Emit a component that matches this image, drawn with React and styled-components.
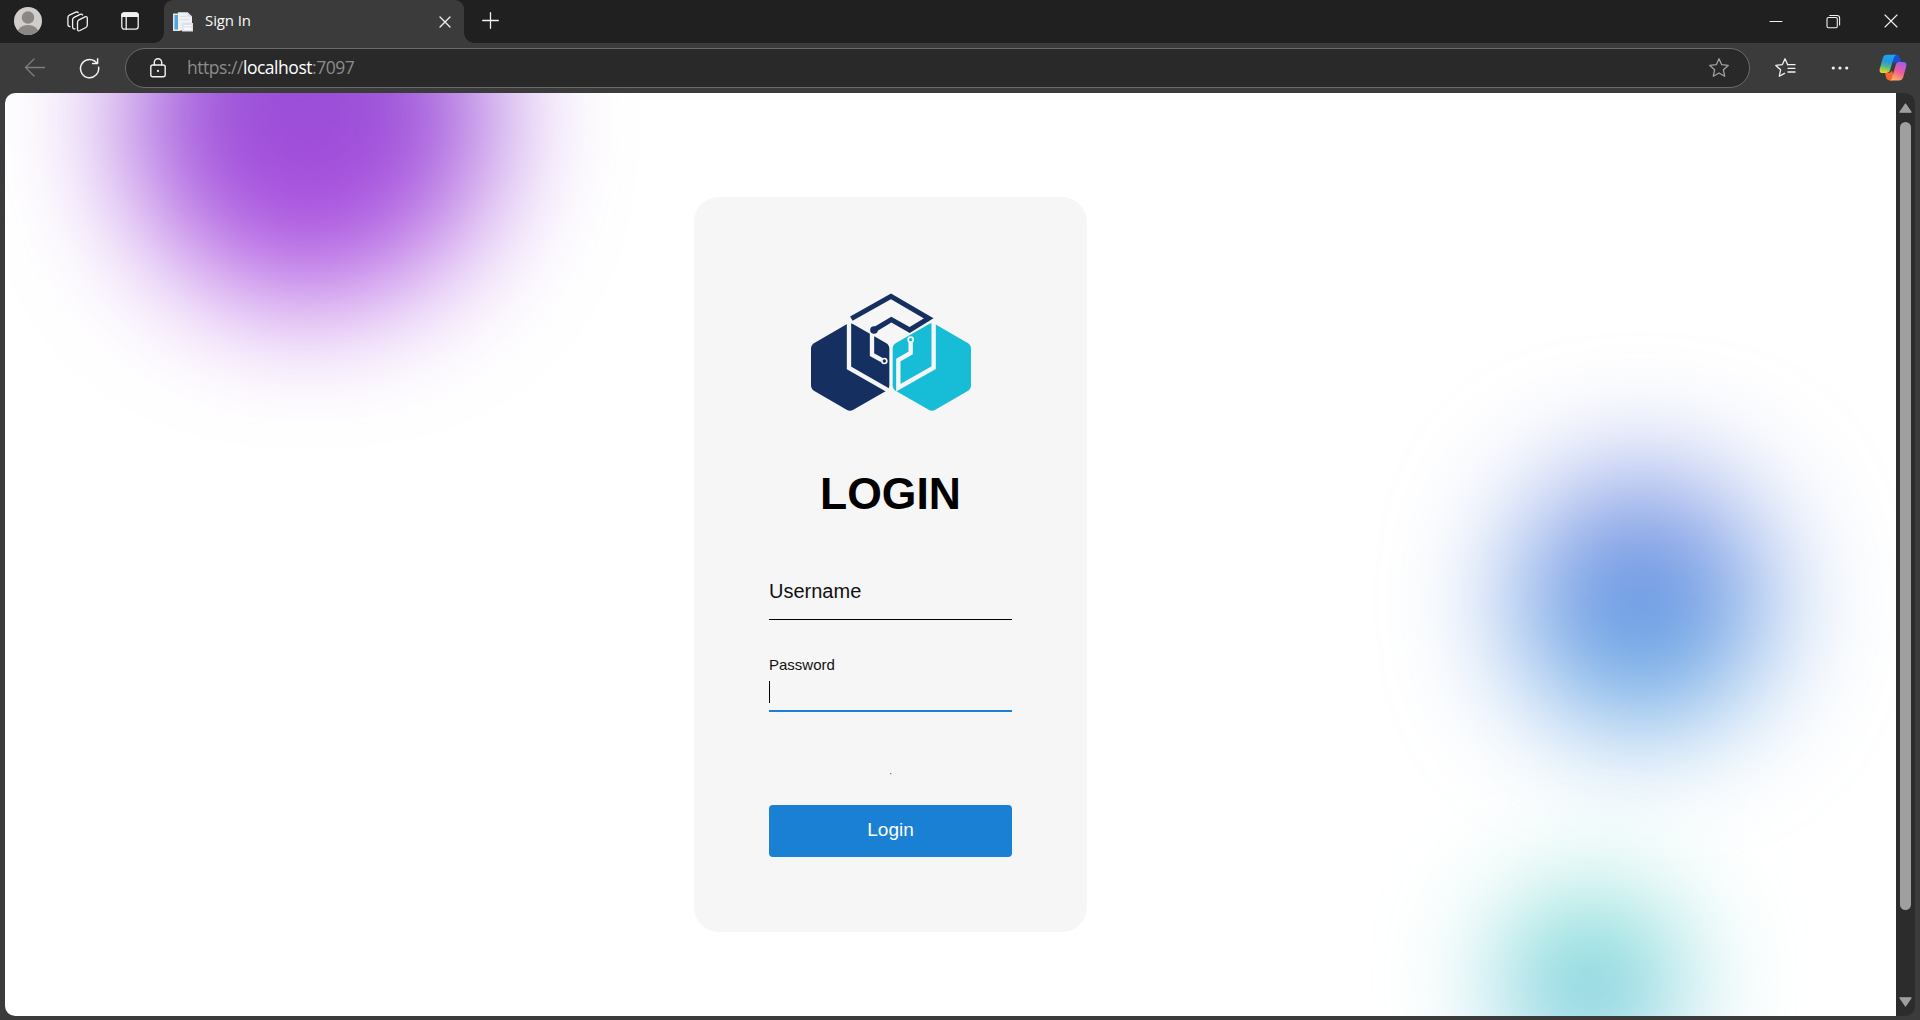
import React from "react";
import styled, { createGlobalStyle } from "styled-components";

const Global = createGlobalStyle`
  * { box-sizing: border-box; }
  html, body, #root { margin: 0; height: 100%; }
  body { overflow: hidden; background: #3b3b3b; font-family: "Liberation Sans", Arial, sans-serif; }
`;

const uiFont = `"Open Sans", "Noto Sans", sans-serif`;

const Window = styled.div`
  display: flex;
  flex-direction: column;
  width: 1920px;
  height: 1020px;
  background: #3b3b3b;
`;

const TabStrip = styled.header`
  display: flex;
  height: 43px;
  background: #202020;
`;

const StripTools = styled.div`
  display: flex;
  align-items: flex-start;
  width: 164px;
  padding: 7px 0 0 14px;
`;

const Glyph = styled.svg`
  display: block;
  flex: none;
  width: ${(p) => p.$w}px;
  height: ${(p) => p.$h}px;
  margin-left: ${(p) => p.$ml || 0}px;
  margin-top: ${(p) => p.$mt || 0}px;
  fill: none;
  stroke: ${(p) => p.$color || "#f2f2f2"};
  stroke-width: ${(p) => p.$sw || 1.3};
  stroke-linecap: round;
  stroke-linejoin: round;
`;

const Tab = styled.div`
  position: relative;
  display: flex;
  align-items: flex-start;
  width: 300px;
  padding: 10px 13px 0 8px;
  background: #3b3b3b;
  border-radius: 9px 9px 0 0;
  &::before, &::after {
    content: "";
    position: absolute;
    bottom: 0;
    width: 10px;
    height: 10px;
  }
  &::before { left: -10px; background: radial-gradient(circle at 0 0, transparent 9.5px, #3b3b3b 10px); }
  &::after { right: -10px; background: radial-gradient(circle at 100% 0, transparent 9.5px, #3b3b3b 10px); }
`;

const TabTitle = styled.span`
  flex: 1;
  margin-left: 11px;
  font: 400 15px/20px ${uiFont};
  letter-spacing: -0.1px;
  color: #fafafa;
`;

const WindowButtons = styled.div`
  display: flex;
  align-items: flex-start;
  margin-left: auto;
  padding: 14px 22px 0 0;
`;

const Toolbar = styled.div`
  display: flex;
  align-items: center;
  height: 50px;
  padding-left: 24px;
`;

const AddressBar = styled.div`
  display: flex;
  align-items: center;
  width: 1625px;
  height: 40px;
  margin-left: 25px;
  padding: 0 20px 0 23px;
  border: 1px solid #6b6b6b;
  border-radius: 20px;
  background: #292929;
`;

const Url = styled.span`
  flex: 1;
  margin-left: 20px;
  padding-bottom: 2px;
  font: 400 17.5px/24px ${uiFont};
  letter-spacing: -0.47px;
  color: #8c8c8c;
  b { font-weight: 400; color: #fff; }
`;

const Viewport = styled.div`
  display: flex;
  width: 1910px;
  height: 923px;
  margin-left: 5px;
  overflow: hidden;
  border-radius: 10px;
  background: #2c2c2c;
`;

const Page = styled.main`
  position: relative;
  display: flex;
  justify-content: center;
  align-items: flex-start;
  width: 1891px;
  padding-top: 104px;
  padding-right: 120px;
  overflow: hidden;
  background: #fff;
`;

const Blob = styled.div`
  position: absolute;
  left: ${(p) => p.$x - p.$r}px;
  top: ${(p) => p.$y - p.$r}px;
  width: ${(p) => p.$r * 2}px;
  height: ${(p) => p.$r * 2}px;
  border-radius: 50%;
  background: linear-gradient(${(p) => p.$from}, ${(p) => p.$to});
  filter: blur(${(p) => p.$blur}px);
`;

const Card = styled.form`
  position: relative;
  display: flex;
  flex-direction: column;
  align-items: center;
  width: 393px;
  height: 735px;
  padding: 95px 75px 75px;
  border-radius: 25px;
  background: #f6f6f6;
`;

const Title = styled.h1`
  margin: 56px 0 59px;
  font-size: 44.5px;
  line-height: 52px;
  font-weight: 700;
  color: #000;
`;

const Field = styled.div`
  display: flex;
  flex-direction: column;
  width: 100%;
  height: ${(p) => (p.$active ? 56 : 41)}px;
  margin-bottom: ${(p) => (p.$active ? 61 : 36)}px;
  border-bottom: ${(p) => (p.$active ? "2px solid #1a80d4" : "1px solid #000")};
`;

const Label = styled.label`
  font-size: ${(p) => (p.$small ? 15 : 20)}px;
  line-height: ${(p) => (p.$small ? 18 : 24)}px;
  color: #111;
`;

const Caret = styled.span`
  width: 1px;
  height: 22px;
  margin-top: 7px;
  background: #000;
`;

const Speck = styled.span`
  width: 2px;
  height: 2px;
  background: linear-gradient(135deg, #777 50%, #ddd 50%);
`;

const Submit = styled.button`
  width: 100%;
  height: 52px;
  margin-top: auto;
  padding: 0 0 2px;
  border: 0;
  border-radius: 4px;
  background: #1a80d4;
  color: #fff;
  font: 400 19px/50px "Liberation Sans", Arial, sans-serif;
`;

const ScrollBar = styled.div`
  display: flex;
  flex-direction: column;
  align-items: center;
  width: 19px;
  padding: 10px 0 9px;
`;

const Thumb = styled.div`
  width: 11px;
  height: 788px;
  margin: 9px 0 auto;
  border-radius: 6px;
  background: #9f9f9f;
`;

const Logo = () => (
  <Glyph $w={162} $h={120} viewBox="60 35 486 360" $color="none">
    <path fill="#142f60" stroke="#142f60" strokeWidth="40" d="M180 149 L83 205 V315 L180 371 L278 315 V205 Z" />
    <path fill="#17bdd7" stroke="#17bdd7" strokeWidth="40" d="M426 149 L328 205 V315 L426 371 L523 315 V205 Z" />
    <g stroke="#f6f6f6" strokeWidth="13" strokeLinecap="butt" strokeLinejoin="miter">
      <path d="M177 120 V263 L300 333" />
      <path d="M431 120 V262 L325 322 V239 L362 218 V186" />
      <path d="M246 160 V223 L275 239" />
    </g>
    <path stroke="#142f60" strokeWidth="15" strokeLinecap="butt" strokeLinejoin="miter" d="M184 115 L303 48 L416 114 L359 149 L304 118 L252 149" />
    <circle cx="252" cy="149" r="11.5" fill="#142f60" />
    <circle cx="283" cy="242" r="7.5" fill="#142f60" stroke="#f6f6f6" strokeWidth="5" />
    <circle cx="362" cy="178" r="7.5" fill="#17bdd7" stroke="#f6f6f6" strokeWidth="5" />
  </Glyph>
);

const Copilot = () => (
  <Glyph $w={28} $h={28} $ml={30} viewBox="0 0 28 28" $color="none">
    <defs>
      <linearGradient id="cpL" x1="0.5" y1="0" x2="0.3" y2="1">
        <stop offset="0" stopColor="#1ea4f2" />
        <stop offset="0.35" stopColor="#2397e0" />
        <stop offset="0.65" stopColor="#52b788" />
        <stop offset="1" stopColor="#f5d41c" />
      </linearGradient>
      <linearGradient id="cpR" x1="0.7" y1="0" x2="0.3" y2="1">
        <stop offset="0" stopColor="#a25cf0" />
        <stop offset="0.5" stopColor="#ee5b96" />
        <stop offset="1" stopColor="#ffb066" />
      </linearGradient>
    </defs>
    <path fill="#1b4fd0" d="M14 0.8 H17.5 Q20 0.8 20.8 3.2 L22.3 8 H18.5 Q16 8 14.8 10 L13 5 Z" />
    <path fill="#f4682f" d="M6 19 H10 Q12 19 13 16.6 L14.6 21 L13 26.4 H10.6 Q8 26.4 7.2 23.8 Z" />
    <path fill="url(#cpL)" d="M7.8 0.8 H17.5 Q15.6 1.2 14.8 3.8 L11.2 15.8 Q10.2 19 7 19 H4 Q-0.4 19 0.8 14.4 L3.7 4.2 Q4.8 0.8 7.8 0.8 Z" />
    <path fill="url(#cpR)" d="M19.8 8 H23.8 Q28.4 8 27.2 12.4 L24.4 22.8 Q23.4 26.4 20 26.4 H10.6 Q12.5 26 13.2 23.4 L16.6 11.2 Q17.5 8 19.8 8 Z" />
  </Glyph>
);

const Star = "M10 0.8 L12.7 6.7 L19.2 7.4 L14.4 11.8 L15.7 18.2 L10 15 L4.3 18.2 L5.6 11.8 L0.8 7.4 L7.3 6.7 Z";

export default function App() {
  return (
    <>
      <Global />
      <Window>
        <TabStrip>
          <StripTools>
            <Glyph $w={28} $h={28} viewBox="0 0 28 28" $color="none">
              <defs><clipPath id="av"><circle cx="14" cy="14" r="14" /></clipPath></defs>
              <g clipPath="url(#av)">
                <rect width="28" height="28" fill="#d0cecb" />
                <circle cx="14" cy="10.5" r="6.2" fill="#8b8785" />
                <ellipse cx="14" cy="25.5" rx="10.5" ry="7.5" fill="#8b8785" />
              </g>
            </Glyph>
            <Glyph $w={22} $h={22} $ml={25} $mt={4} viewBox="0 0 22 22">
              <path d="M12 8.8 L18 5.9 Q20.3 5 20.3 7.3 V14 Q20.3 15.8 18.9 16.5 L13 19.5 Q10.5 20.6 10.5 18.2 V11.2 Q10.5 9.5 12 8.8 Z" />
              <path d="M8 17.9 Q5.6 18.2 5.6 15.8 V8.8 Q5.6 7 7.1 6.3 L13.2 3.4 Q15 2.8 15.6 4" />
              <path d="M3 15.6 Q0.9 15.4 0.9 13.2 V6.6 Q0.9 4.8 2.4 4.1 L8.8 1.2 Q10.6 0.6 11.2 1.7" />
            </Glyph>
            <Glyph $w={18} $h={18} $ml={32} $mt={5} viewBox="0 0 18 18" $sw={1.3}>
              <rect x="0.8" y="0.8" width="16.4" height="16.4" rx="2.6" />
              <path d="M1 4.4 V3.2 Q1 1 3.2 1 H14.8 Q17 1 17 3.2 V4.4 Z" fill="#f2f2f2" />
              <path d="M5.2 5 V17" />
            </Glyph>
          </StripTools>
          <Tab>
            <Glyph $w={22} $h={22} $mt={2} viewBox="0 0 22 22" $color="none">
              <path fill="#dfe8ef" d="M1 1.5 H8 V19 H1 Z" />
              <path fill="#55a5d8" d="M2.5 3 H6 V17.5 H2.5 Z" />
              <path fill="#eef1f4" d="M6 0.3 H15.5 L20 4.5 V18.5 H6 Z" />
              <path fill="#d6dce2" d="M15.5 0.3 L20 4.5 H15.5 Z M8 4 H14 V4.8 H8 Z M8 7 H17 V7.8 H8 Z" />
              <path fill="#dce0e5" d="M10 11 H21 V19.5 H10 Z" />
              <path fill="#f7f8fa" d="M11.5 13 H19.5 V14.2 H11.5 Z M11.5 15.6 H19.5 V18.2 H11.5 Z" />
            </Glyph>
            <TabTitle>Sign In</TabTitle>
            <Glyph $w={12} $h={12} $mt={6} viewBox="0 0 12 12"><path d="M1 1 L11 11 M11 1 L1 11" /></Glyph>
          </Tab>
          <Glyph $w={17} $h={17} $ml={18} $mt={12} viewBox="0 0 17 17"><path d="M8.5 0.7 V16.3 M0.7 8.5 H16.3" /></Glyph>
          <WindowButtons>
            <Glyph $w={14} $h={14} viewBox="0 0 14 14" $sw={1}><path d="M1 7.5 H13" /></Glyph>
            <Glyph $w={15} $h={15} $ml={43} viewBox="0 0 15 15" $sw={1.1}>
              <rect x="1" y="3.5" width="10.3" height="10.3" rx="1.5" />
              <path d="M3.8 1.5 H11 Q13.6 1.5 13.6 4 V11" />
            </Glyph>
            <Glyph $w={14} $h={14} $ml={43} viewBox="0 0 14 14" $sw={1.1}><path d="M1 1 L13 13 M13 1 L1 13" /></Glyph>
          </WindowButtons>
        </TabStrip>

        <Toolbar>
          <Glyph $w={22} $h={20} viewBox="0 0 22 20" $color="#7e7e7e"><path d="M20.5 9.5 H1.5 M10 1 L1.5 9.5 L10 18" /></Glyph>
          <Glyph $w={21} $h={21} $ml={33} viewBox="0 0 21 21" $sw={1.5}>
            <path d="M19.6 9.2 A9.1 9.1 0 1 1 15.6 3 L18.2 5.2 M18.6 0.8 V5.6 H13.6" />
          </Glyph>
          <AddressBar>
            <Glyph $w={18} $h={20} viewBox="0 0 18 20" $sw={1.4}>
              <rect x="1.8" y="7" width="14.4" height="11.8" rx="2" />
              <path d="M5.3 7 V4.4 A3.7 3.7 0 0 1 12.7 4.4 V7" />
              <circle cx="9" cy="12.9" r="1.1" fill="#f2f2f2" stroke="none" />
            </Glyph>
            <Url>https://<b>localhost</b>:7097</Url>
            <Glyph $w={20} $h={20} viewBox="0 0 20 20" $color="#a0a0a0"><path d={Star} /></Glyph>
          </AddressBar>
          <Glyph $w={21} $h={20} $ml={25} viewBox="0 0 21 20">
            <path d="M12.7 6.7 L10 0.8 L7.3 6.7 L0.8 7.4 L5.6 11.8 L4.3 18.2 L9.5 15.4 M13 10.3 H20 M13 14 H20" />
            <path d="M12.7 6.7 H20" />
          </Glyph>
          <Glyph $w={18} $h={4} $ml={35} viewBox="0 0 18 4" $color="none">
            <g fill="#f2f2f2"><circle cx="2.3" cy="2" r="1.6" /><circle cx="9" cy="2" r="1.6" /><circle cx="15.7" cy="2" r="1.6" /></g>
          </Glyph>
          <Copilot />
        </Toolbar>

        <Viewport>
          <Page>
            <Blob $x={305} $y={26} $r={183} $blur={64} $from="#8a50d0" $to="#b04ce2" />
            <Blob $x={1636} $y={506} $r={126} $blur={62} $from="#828de3" $to="#50a4e2" />
            <Blob $x={1586} $y={888} $r={86} $blur={60} $from="#74e4ca" $to="#66b6e2" />
            <Card>
              <Logo />
              <Title>LOGIN</Title>
              <Field><Label>Username</Label></Field>
              <Field $active><Label $small>Password</Label><Caret /></Field>
              <Speck />
              <Submit type="button">Login</Submit>
            </Card>
          </Page>
          <ScrollBar>
            <Glyph $w={13} $h={10} viewBox="0 0 13 10" $color="#9f9f9f"><path fill="#9f9f9f" d="M6.5 1 L12 9.2 H1 Z" /></Glyph>
            <Thumb />
            <Glyph $w={13} $h={10} viewBox="0 0 13 10" $color="#9f9f9f"><path fill="#9f9f9f" d="M6.5 9 L12 0.8 H1 Z" /></Glyph>
          </ScrollBar>
        </Viewport>
      </Window>
    </>
  );
}
